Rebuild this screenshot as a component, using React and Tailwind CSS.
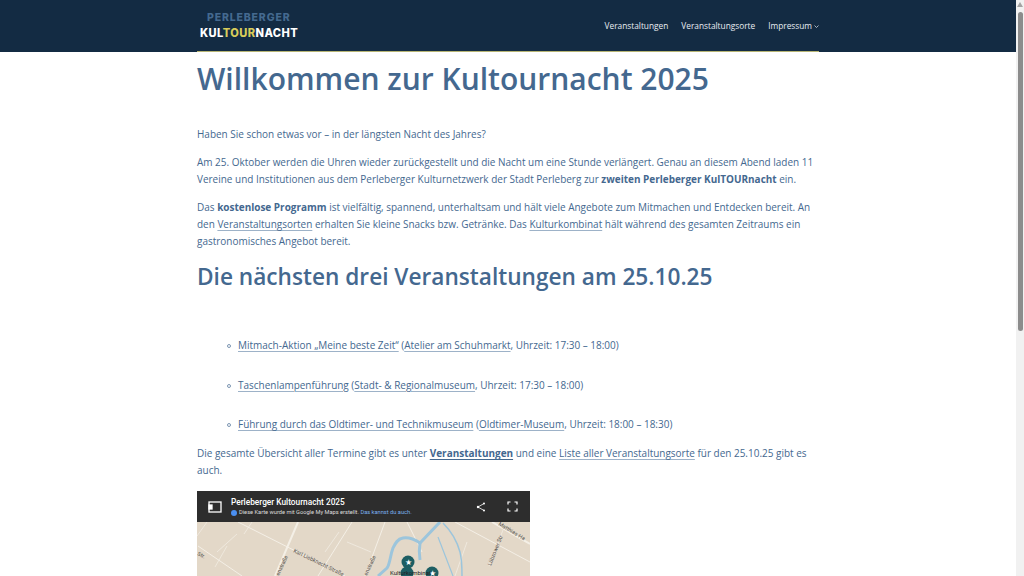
const sans = "font-['Open_Sans',sans-serif]";

function Lnk({ children }) {
  return <a href="#" className="underline decoration-[#9db2c8] underline-offset-2">{children}</a>;
}

function Item({ children }) {
  return (
    <li className="relative">
      <span className="absolute -left-[11px] top-[7px] w-1 h-1 rounded-full border border-[#7d97b3]" />
      {children}
    </li>
  );
}

function MapEmbed() {
  return (
    <div className="w-[333px] h-[85px] overflow-hidden bg-[#e3d8c8]">
      <div className="h-[31px] bg-[#2d2d2d] flex items-center font-['Roboto',sans-serif]">
        <svg width="14" height="12" viewBox="0 0 14 12" className="ml-[11px] shrink-0" fill="none" stroke="#fff" strokeWidth="1.3">
          <rect x="1" y="1" width="12" height="10" />
          <rect x="1" y="4" width="3" height="4" fill="#fff" />
        </svg>
        <div className="ml-[9px] flex-1">
          <div className="text-[8.3px] leading-3 font-medium text-white">Perleberger Kultournacht 2025</div>
          <div className="flex items-center text-[5.7px] leading-[9px] text-[#ddd]">
            <span className="w-[6px] h-[6px] rounded-full bg-[#4a8ff0] mr-[2px]" />
            Diese Karte wurde mit Google My Maps erstellt.&nbsp;<span className="text-[#7ab0f0]">Das kannst du auch.</span>
          </div>
        </div>
        <svg width="10" height="10" viewBox="0 0 10 10" className="shrink-0" fill="#fff" stroke="#fff">
          <path d="M8 1.5 2 5l6 3.5" fill="none" strokeWidth="0.8" />
          <circle cx="8" cy="1.5" r="1" strokeWidth="0" />
          <circle cx="2" cy="5" r="1.2" strokeWidth="0" />
          <circle cx="8" cy="8.5" r="1" strokeWidth="0" />
        </svg>
        <svg width="11" height="11" viewBox="0 0 11 11" className="ml-[21px] mr-[12px] shrink-0" fill="none" stroke="#fff" strokeWidth="1.2">
          <path d="M1 3.5V1h2.5M7.500 1H10v2.500M10 7.500V10H7.500M3.500 10H1V7.500" />
        </svg>
      </div>
      <svg width="333" height="54" viewBox="0 0 333 54" className="block">
        <g stroke="#f4efe6" fill="none" strokeWidth="1">
          <path d="M41 0 148 54M1 24 45 54M155 0 121 54M188 0 168 54M258 0 333 40M210 0 225 30" />
          <path d="M10 0 0 14M55 0l-8 12M30 24 18 45M270 20l-12 34M306 8l-14 36M128 30l14-20M20 30l20-18M150 20l24 10" strokeWidth="0.7" />
          <path d="M101 0 78 54M295 0 333 22" strokeWidth="2" />
        </g>
        <g stroke="#9cc5dc" fill="none" strokeWidth="3">
          <path d="M243 0 223 21c-6-4-11-6-17-5-6 1-8 6-10 10-3 8-3 16-6 20l-9 8" />
          <path d="M223 21c-1 6-1 11 0 17" />
          <path d="M246 1c8 8 14 18 17 29 2 8 2 16 2 24" strokeWidth="1.5" />
          <path d="M241 15 256 54" strokeWidth="1.2" />
        </g>
        <g fontFamily="Roboto, sans-serif" fill="#55524d" fontSize="5.500">
          <text x="96" y="30" transform="rotate(26 96 30)">Karl Liebknecht-Straße</text>
          <text x="301" y="3" transform="rotate(31 301 3)">Matthias-Ha</text>
          <text x="82" y="54" transform="rotate(-65 82 54)">enstraße</text>
          <text x="170" y="54" transform="rotate(-65 170 54)">enstraße</text>
          <text x="294" y="44" transform="rotate(-68 294 44)">Lübzower Str</text>
          <text x="0" y="33" transform="rotate(26 0 33)">Str.</text>
        </g>
        <g fill="#1d5e63">
          <circle cx="211" cy="40" r="6.500" />
          <circle cx="210" cy="51" r="6.500" />
          <circle cx="235" cy="51" r="6.500" />
        </g>
        <g fill="#fff" fontSize="8" textAnchor="middle">
          <text x="211" y="43">★</text>
          <text x="235" y="54">★</text>
        </g>
        <text x="193" y="53" fontFamily="Roboto, sans-serif" fontSize="6" fill="#222">Kulturkombinat</text>
      </svg>
    </div>
  );
}

export default function App() {
  return (
    <div className={`flex h-[576px] w-[1024px] overflow-hidden bg-white text-[#44688f] ${sans}`}>
      <div className="flex-1 min-w-0">
        <header className="h-[52px] bg-[#132b43]">
          <div className="mx-[197px] h-[52px] border-b border-[#b7b574] flex items-center justify-between">
            <div className="pt-px font-['Inter',sans-serif] font-extrabold leading-none">
              <div className="ml-[10px] text-[10.5px] tracking-[0.85px] text-[#44698f]">PERLEBERGER</div>
              <div className="ml-[3px] mt-[5px] text-[11.1px] tracking-[0.4px] text-white">
                KUL<span className="text-[#d8cc5a]">TOUR</span>NACHT
              </div>
            </div>
            <nav className="flex items-center gap-[13px] pt-px text-[8.3px] text-[#e8edf2]">
              <a href="#">Veranstaltungen</a>
              <a href="#">Veranstaltungsorte</a>
              <a href="#" className="flex items-center">
                Impressum
                <svg width="5" height="3" viewBox="0 0 5 3" className="ml-[2px] mt-px" fill="none" stroke="#e8edf2" strokeWidth="0.7">
                  <path d="M.5.5 2.500 2.500 4.500.5" />
                </svg>
              </a>
            </nav>
          </div>
        </header>

        <main className="px-[197px] text-[9.97px] leading-[17px]">
          <h1 className="mt-[9px] text-[30px] leading-[36px] font-semibold">Willkommen zur Kultournacht 2025</h1>
          <p className="mt-[29px]">Haben Sie schon etwas vor – in der längsten Nacht des Jahres?</p>
          <p className="mt-[11px]">
            Am 25. Oktober werden die Uhren wieder zurückgestellt und die Nacht um eine Stunde verlängert. Genau an diesem Abend laden 11 Vereine und Institutionen aus dem Perleberger Kulturnetzwerk der Stadt Perleberg zur <strong>zweiten Perleberger KulTOURnacht</strong> ein.
          </p>
          <p className="mt-[11px]">
            Das <strong>kostenlose Programm</strong> ist vielfältig, spannend, unterhaltsam und hält viele Angebote zum Mitmachen und Entdecken bereit. An den <Lnk>Veranstaltungsorten</Lnk> erhalten Sie kleine Snacks bzw. Getränke. Das <Lnk>Kulturkombinat</Lnk> hält während des gesamten Zeitraums ein gastronomisches Angebot bereit.
          </p>
          <h2 className="mt-[13px] text-[22.65px] leading-[28px] font-semibold">Die nächsten drei Veranstaltungen am 25.10.25</h2>
          <ul className="mt-[46px] pl-[41px] flex flex-col gap-[22.500px]">
            <Item><Lnk>Mitmach-Aktion „Meine beste Zeit“</Lnk> (<Lnk>Atelier am Schuhmarkt</Lnk>, Uhrzeit: 17:30 – 18:00)</Item>
            <Item><Lnk>Taschenlampenführung</Lnk> (<Lnk>Stadt- &amp; Regionalmuseum</Lnk>, Uhrzeit: 17:30 – 18:00)</Item>
            <Item><Lnk>Führung durch das Oldtimer- und Technikmuseum</Lnk> (<Lnk>Oldtimer-Museum</Lnk>, Uhrzeit: 18:00 – 18:30)</Item>
          </ul>
          <p className="mt-[12px]">
            Die gesamte Übersicht aller Termine gibt es unter <strong><a href="#" className="underline underline-offset-2">Veranstaltungen</a></strong> und eine <Lnk>Liste aller Veranstaltungsorte</Lnk> für den 25.10.25 gibt es auch.
          </p>
          <div className="mt-[12px]">
            <MapEmbed />
          </div>
        </main>
      </div>

      <div className="w-2 shrink-0 bg-[#f1f1f1] flex flex-col items-center">
        <svg width="6" height="5" viewBox="0 0 6 5" className="mt-[2px]"><path d="M3 0 6 5H0z" fill="#a3a3a3" /></svg>
        <div className="w-[5px] h-[319px] mt-[5px] rounded-full bg-[#8c8c8c]" />
      </div>
    </div>
  );
}
